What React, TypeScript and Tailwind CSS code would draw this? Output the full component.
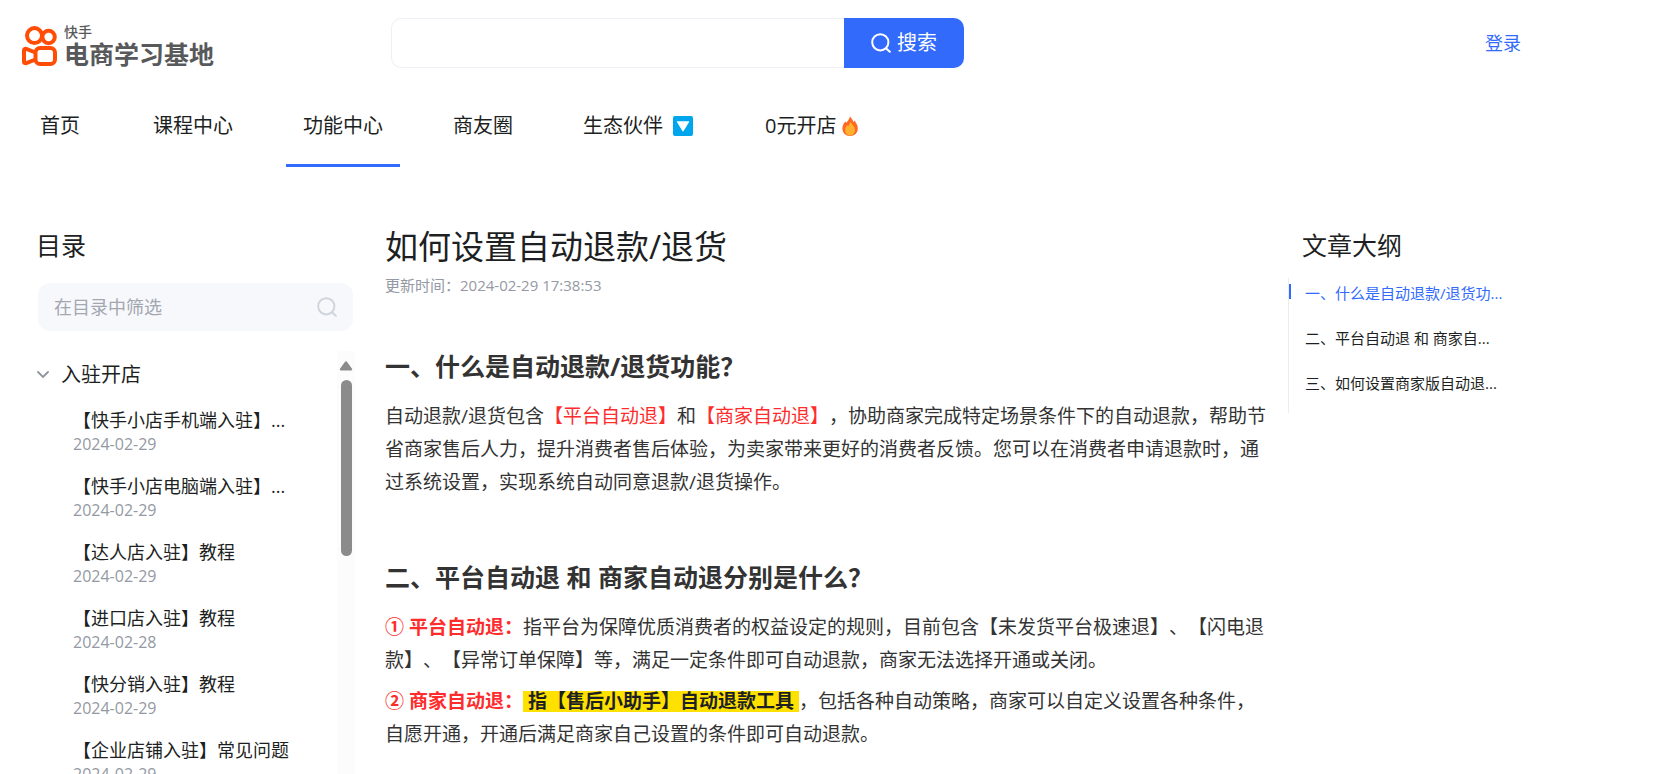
import React from 'react';

const navItems = [
    { name: '首页' },
    { name: '课程中心' },
    { name: '功能中心', active: true },
    { name: '商友圈' },
    { name: '生态伙伴', icon: 'down' },
    { name: '0元开店', icon: 'fire' },
];

const articles = [
    { title: '【快手小店手机端入驻】...', date: '2024-02-29' },
    { title: '【快手小店电脑端入驻】...', date: '2024-02-29' },
    { title: '【达人店入驻】教程', date: '2024-02-29' },
    { title: '【进口店入驻】教程', date: '2024-02-28' },
    { title: '【快分销入驻】教程', date: '2024-02-29' },
    { title: '【企业店铺入驻】常见问题', date: '2024-02-29' },
];

const outline = [
    { title: '一、什么是自动退款/退货功...', active: true },
    { title: '二、平台自动退 和 商家自...' },
    { title: '三、如何设置商家版自动退...' },
];

const SearchIcon: React.FC<{ className: string }> = ({ className }) => (
    <svg className={className} viewBox="0 0 20 20" fill="none" stroke="currentColor" strokeWidth="2" strokeLinecap="round" aria-hidden="true">
        <circle cx="9.3" cy="9.3" r="8.1" />
        <path d="M15.2 15.4 18.8 18.8" />
    </svg>
);

const DownIcon = () => (
    <svg className="mr-0.5 ml-2.5 h-5 w-5" viewBox="0 0 20 20" aria-hidden="true">
        <rect width="20" height="20" rx="2" fill="#00a6ed" />
        <path d="M4.4 5.2h11.2c.5 0 .7.4.5.8l-5.5 9c-.3.5-.9.5-1.2 0l-5.5-9c-.2-.4 0-.8.5-.8Z" fill="#fff" />
    </svg>
);

const FireIcon = () => (
    <svg className="ml-1.5 h-5 w-4" viewBox="0 0 16 20" aria-hidden="true">
        <path d="M7.9.2c.6 1.3 2 2.3 2.7 3.8.3.7.5 1.5.5 2.2.5-.4.9-1 1-1.700 1.900 1.800 3.700 4.700 3.700 8 0 4.500-3.300 7.400-7.700 7.400S.4 17 .4 12.500c0-3.200 1.500-5.200 3-6.900.4.3.6.8.7 1.300C5.200 5.500 7.500 3.400 7.900.2Z" fill="#ff6723" />
        <path d="M8.200 5.800c1.300 2 4.800 4.500 4.800 8.300 0 2.900-2 5.300-4.900 5.300s-5-2.200-5-5.200c0-2.300 1-4 2.100-5.200.4.4.6.9.7 1.400 1.100-1.100 2-2.800 2.300-4.600Z" fill="#ffb02e" />
    </svg>
);

const Logo = () => (
    <a href="#" className="flex items-center pt-1.5 text-[#58595b]">
        <svg className="h-10 w-9" viewBox="0 0 36 40" fill="none" stroke="#ff4d06" strokeWidth="4" strokeLinejoin="round" aria-hidden="true">
            <circle cx="12.5" cy="9.6" r="7.5" />
            <circle cx="26.6" cy="11" r="6.2" />
            <rect x="13.5" y="22" width="19.5" height="16" rx="4.5" />
            <path d="M13.5 26.5 4.2 22.8c-1-.4-2.2.2-2.2 1.3v11.800c0 1.100 1.200 1.700 2.200 1.300l9.300-3.700" />
        </svg>
        <span className="ml-1.5 flex flex-col">
            <span className="text-[14px] leading-4 font-medium">快手</span>
            <span className="text-[25px] leading-7 font-bold">电商学习基地</span>
        </span>
    </a>
);

const Header = () => (
    <header>
        <div className="flex items-center pt-[18px] pr-[134px] pl-[22px]">
            <div className="w-[369px] shrink-0">
                <Logo />
            </div>
            <form className="flex h-[50px] w-[573px]" onSubmit={(e) => e.preventDefault()}>
                <input
                    type="text"
                    aria-label="搜索课程"
                    className="min-w-0 flex-1 rounded-l-[10px] border border-r-0 border-[#eff0f6] px-4 text-[20px] outline-none"
                />
                <button type="submit" className="flex w-[120px] items-center justify-center gap-1.5 rounded-r-[10px] bg-[#326bfb] text-[20px] text-white">
                    <SearchIcon className="h-5 w-5" />
                    搜索
                </button>
            </form>
            <a href="#" className="ml-auto text-[18px] text-[#326bfb]">登录</a>
        </div>
        <nav className="mt-11 flex gap-9 pl-[23px]">
            {navItems.map((item) => (
                <a
                    key={item.name}
                    href="#"
                    className={`flex min-w-[77px] items-center border-b-3 px-[17px] pb-6 text-[20px] leading-7 whitespace-nowrap ${item.active ? 'border-[#326bfb]' : 'border-transparent'}`}
                >
                    {item.name}
                    {item.icon === 'down' && <DownIcon />}
                    {item.icon === 'fire' && <FireIcon />}
                </a>
            ))}
        </nav>
    </header>
);

const Catalog = () => (
    <aside className="flex min-h-0 w-[319px] shrink-0 flex-col">
        <h2 className="text-[25px] leading-[38px]">目录</h2>
        <div className="mt-[19px] mr-0.5 ml-0.5 flex h-12 shrink-0 items-center rounded-xl bg-[#f7f8fc] px-4">
            <input
                type="text"
                aria-label="在目录中筛选"
                placeholder="在目录中筛选"
                className="min-w-0 flex-1 bg-transparent text-[18px] outline-none placeholder:text-[#a3a7b0]"
            />
            <SearchIcon className="h-5 w-5 text-[#cfd4dd]" />
        </div>
        <div className="mt-5 flex min-h-0 flex-1 overflow-hidden">
            <div className="min-w-0 flex-1">
                <button type="button" className="flex items-center gap-3 pt-2.5 pl-px text-[20px] leading-7">
                    <svg className="h-3 w-3" viewBox="0 0 12 12" fill="none" stroke="#8f949e" strokeWidth="1.8" strokeLinecap="round" aria-hidden="true">
                        <path d="m1 3 5 5 5-5" />
                    </svg>
                    入驻开店
                </button>
                <ul className="mt-[19px] ml-[37px] flex flex-col gap-[18px]">
                    {articles.map((item) => (
                        <li key={item.title}>
                            <a href="#" className="block truncate text-[18px] leading-6">{item.title}</a>
                            <span className="block text-[16px] leading-6 text-[#9499a3]">{item.date}</span>
                        </li>
                    ))}
                </ul>
            </div>
            {/* scrollbar */}
            <div className="flex w-[18px] flex-col items-center bg-[#fcfcfc] pt-2.5">
                <svg className="h-2.5 w-3.5" viewBox="0 0 14 10" fill="#8b8b8b" aria-hidden="true">
                    <path d="M6 .8c.5-.7 1.5-.7 2 0l5 7c.5.8.1 1.7-.8 1.700H1.800C.9 9.500.5 8.600 1 7.800Z" />
                </svg>
                <div className="mt-[9px] h-44 w-[11px] rounded-full bg-[#8b8b8b]"></div>
            </div>
        </div>
    </aside>
);

const Article = () => (
    <main className="ml-[30px] min-w-0 flex-1 pr-4 text-[#333]">
        <h1 className="text-[33px] leading-[42px] text-[#1d1f23]">如何设置自动退款/退货</h1>
        <p className="mt-2 text-[15px] leading-[18px] text-[#9499a3]">更新时间：2024-02-29 17:38:53</p>

        <h2 className="mt-[54px] text-[25px] leading-9 font-bold">一、什么是自动退款/退货功能？</h2>
        <p className="mt-4 text-[19px] leading-[33px]">
            自动退款/退货包含<span className="text-[#fe2c2c]">【平台自动退】</span>和<span className="text-[#fe2c2c]">【商家自动退】</span>，协助商家完成特定场景条件下的自动退款，帮助节省商家售后人力，提升消费者售后体验，为卖家带来更好的消费者反馈。您可以在消费者申请退款时，通过系统设置，实现系统自动同意退款/退货操作。
        </p>

        <h2 className="mt-[60px] text-[25px] leading-9 font-bold">二、平台自动退 和 商家自动退分别是什么？</h2>
        <p className="mt-4 text-[19px] leading-[33px]">
            <strong className="text-[#fe2c2c]">① 平台自动退：</strong>指平台为保障优质消费者的权益设定的规则，目前包含【未发货平台极速退】、【闪电退款】、【异常订单保障】等，满足一定条件即可自动退款，商家无法选择开通或关闭。
        </p>
        <p className="mt-2 text-[19px] leading-[33px]">
            <strong className="text-[#fe2c2c]">② 商家自动退：</strong>
            <mark className="inline-block bg-[#ffe100] px-[5px] leading-[21px] font-bold text-[#1d1f23]">指【售后小助手】自动退款工具</mark>，包括各种自动策略，商家可以自定义设置各种条件，自愿开通，开通后满足商家自己设置的条件即可自动退款。
        </p>
    </main>
);

const Outline = () => (
    <aside className="w-[367px] shrink-0">
        <h2 className="ml-3.5 text-[25px] leading-[38px]">文章大纲</h2>
        <ul className="mt-3.5 flex flex-col border-l border-[#ebedf5]">
            {outline.map((item) => (
                <li key={item.title} className="flex h-[45px] items-start pt-1.5">
                    <span className={`h-[15px] w-0.5 ${item.active ? 'bg-[#326bfb]' : 'bg-transparent'}`}></span>
                    <a href="#" className={`ml-3.5 text-[15px] leading-[18px] ${item.active ? 'text-[#326bfb]' : ''}`}>{item.title}</a>
                </li>
            ))}
        </ul>
    </aside>
);

const App: React.FC = () => {
    return (
        <div className="flex h-screen flex-col overflow-hidden bg-white font-['Open_Sans','Noto_Sans_CJK_SC',sans-serif] text-[#1d1f23] [text-spacing-trim:space-all]">
            <Header />
            <div className="flex min-h-0 flex-1 pt-[59px] pl-9">
                <Catalog />
                <Article />
                <Outline />
            </div>
        </div>
    );
};

export default App;
